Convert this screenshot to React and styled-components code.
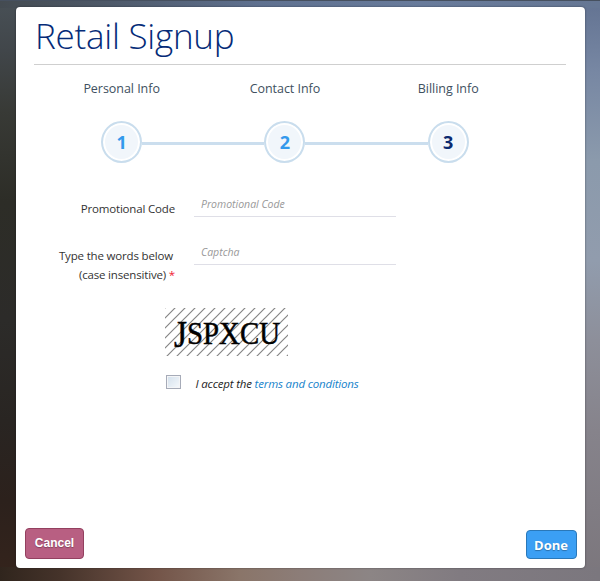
import React from "react";
import styled, { createGlobalStyle } from "styled-components";

const GlobalStyle = createGlobalStyle`
  * { box-sizing: border-box; }
  body { margin: 0; font-family: "Open Sans", sans-serif; }
`;

const Page = styled.main`
  height: 581px;
  padding: 6px 15.5px 13px;
  overflow: hidden;
  border-top: 1px solid #46505f;
  background:
    linear-gradient(90deg, #30251d 0, #45332a 60px, #735448 155px, #8a7569 240px, #8c7d78 300px, #8c8585 370px, #817b81 460px, #7b777e 600px) 0 100% / 100% 14px no-repeat,
    linear-gradient(90deg, #444b51 0, #4d5867 100px, #5f7190 260px, #687b9b 420px, #667794 600px) 0 0 / 100% 7px no-repeat,
    linear-gradient(180deg, #485056 0, #41464a 50px, #383a36 110px, #2d2d27 200px, #2c2b29 320px, #292522 420px, #2c211c 500px, #35241c 581px) 0 0 / 50% 100% no-repeat,
    linear-gradient(180deg, #637392 0, #7787a3 70px, #8b9aac 160px, #919cad 260px, #8d8f9a 340px, #86838b 430px, #7b767c 581px) 100% 0 / 50% 100% no-repeat;
`;

const Card = styled.form`
  display: flex;
  flex-direction: column;
  height: 560.5px;
  padding: 0 8px 9px 9.5px;
  border-radius: 4px;
  background: #fff;
  box-shadow: 0 0 2px rgba(20, 25, 30, 0.6);
`;

const Title = styled.h1`
  flex: none;
  height: 58px;
  margin: 0 11px 0 9px;
  padding-left: 1px;
  border-bottom: 1px solid #cfcfcf;
  color: #052b78;
  font-size: 35px;
  font-weight: 300;
  letter-spacing: -0.25px;
  line-height: 58px;
  white-space: nowrap;
`;

const Steps = styled.ol`
  display: grid;
  flex: none;
  grid-template-columns: repeat(3, 163.3px);
  height: 124px;
  margin: 0 0 0 15px;
  padding: 0;
  list-style: none;
`;

const Step = styled.li`
  display: flex;
  flex-direction: column;
  align-items: center;
  color: #405060;
  font-size: 12.5px;
  letter-spacing: -0.04px;
  line-height: 18px;
  padding-top: 15px;
`;

const Track = styled.div`
  display: grid;
  grid-template-columns: 1fr 41px 1fr;
  align-items: center;
  width: 100%;
  margin-top: 23px;
`;

const Line = styled.span`
  height: 3px;
  margin-top: 2px;
  background: ${(p) => (p.$shown ? "#cbdeee" : "transparent")};
`;

const Circle = styled.span`
  display: flex;
  align-items: center;
  justify-content: center;
  width: 41px;
  height: 42px;
  border: 2px solid #c9dded;
  border-radius: 50%;
  background: #f1f6fb;
  box-shadow: inset 0 0 0 2px #fff;
  color: ${(p) => (p.$current ? "#0b2a70" : "#3399ec")};
  font-size: 18px;
  font-weight: 700;
`;

const Field = styled.div`
  display: grid;
  flex: none;
  grid-template-columns: 150px 202px;
  column-gap: 19px;
  height: ${(p) => p.$height}px;
`;

const Label = styled.label`
  padding-top: ${(p) => p.$top}px;
  color: #333;
  font-size: 11.5px;
  letter-spacing: -0.17px;
  line-height: 19px;
  text-align: right;
  white-space: nowrap;
`;

const FirstLine = styled.span`
  display: block;
  padding-right: 2px;
`;

const Required = styled.span`
  color: #f01834;
`;

const Input = styled.input`
  width: 202px;
  height: 28px;
  padding: 3px 7px 0;
  border: 0;
  border-bottom: 1px solid #dfdfe7;
  outline: 0;
  font: italic 10.5px "Open Sans", sans-serif;
  &::placeholder { color: #999; opacity: 1; }
`;

const Captcha = styled.svg`
  display: block;
  flex: none;
  overflow: visible;
  margin: 16px 0 0 139.5px;
`;

const Terms = styled.label`
  display: flex;
  align-items: center;
  margin: 19px 0 0 140.5px;
  color: #222;
  font-size: 11.5px;
  font-style: italic;
  letter-spacing: -0.17px;
  line-height: 18px;
  white-space: nowrap;
`;

const Checkbox = styled.input`
  appearance: none;
  width: 15px;
  height: 14px;
  margin: 0 15px 4px 0;
  border: 1px solid #a6abb8;
  background: linear-gradient(135deg, #d3e0ec, #f6f9fc);
  box-shadow: inset 0 0 0 1px #f4f5f7;
`;

const TermsLink = styled.a`
  color: #1683cb;
  text-decoration: none;
`;

const Actions = styled.footer`
  display: flex;
  align-items: flex-end;
  justify-content: space-between;
  margin-top: auto;
`;

const Button = styled.button`
  padding: 0;
  border-radius: 4px;
  color: #fff;
  font-weight: 700;
  text-shadow: 0 1px 1px rgba(0, 0, 0, 0.3);
`;

const CancelButton = styled(Button)`
  width: 59px;
  height: 31px;
  border: 1px solid #93405f;
  background: #b85f82;
  font-family: "Liberation Sans", Arial, sans-serif;
  font-size: 12px;
`;

const DoneButton = styled(Button)`
  width: 51px;
  height: 29px;
  padding-top: 1px;
  border: 1px solid #2a78b9;
  background: #3b9ff4;
  font-family: "Open Sans", sans-serif;
  font-size: 13px;
`;

const steps = ["Personal Info", "Contact Info", "Billing Info"];

export default function App() {
  return (
    <>
      <GlobalStyle />
      <Page>
        <Card>
          <Title>Retail Signup</Title>
          <Steps>
            {steps.map((name, i) => (
              <Step key={name}>
                {name}
                <Track>
                  <Line $shown={i > 0} />
                  <Circle $current={i === 2}>{i + 1}</Circle>
                  <Line $shown={i < 2} />
                </Track>
              </Step>
            ))}
          </Steps>
          <Field $height={48}>
            <Label htmlFor="promo" $top={10}>Promotional Code</Label>
            <Input id="promo" placeholder="Promotional Code" />
          </Field>
          <Field $height={55}>
            <Label htmlFor="captcha" $top={9}>
              <FirstLine>Type the words below</FirstLine>
              (case insensitive) <Required>*</Required>
            </Label>
            <Input id="captcha" placeholder="Captcha" />
          </Field>
          <Captcha width="123" height="48" viewBox="0 0 123 48">
            <defs>
              <pattern id="hatch" width="10" height="10" patternUnits="userSpaceOnUse">
                <path d="M-1 11 11-1M-1 1 1-1M9 11 11 9" stroke="#858585" strokeWidth="1.2" />
              </pattern>
            </defs>
            <rect width="123" height="48" fill="url(#hatch)" />
            <text x="9" y="39" textLength="106" lengthAdjust="spacingAndGlyphs" fontFamily="Liberation Serif, serif" fontSize="32" stroke="#000" strokeWidth="0.5">
              <tspan fontSize="37">J</tspan><tspan dy="-3">SPXCU</tspan>
            </text>
          </Captcha>
          <Terms>
            <Checkbox type="checkbox" />
            <span>I accept the <TermsLink href="#terms">terms and conditions</TermsLink></span>
          </Terms>
          <Actions>
            <CancelButton type="button">Cancel</CancelButton>
            <DoneButton type="button">Done</DoneButton>
          </Actions>
        </Card>
      </Page>
    </>
  );
}
